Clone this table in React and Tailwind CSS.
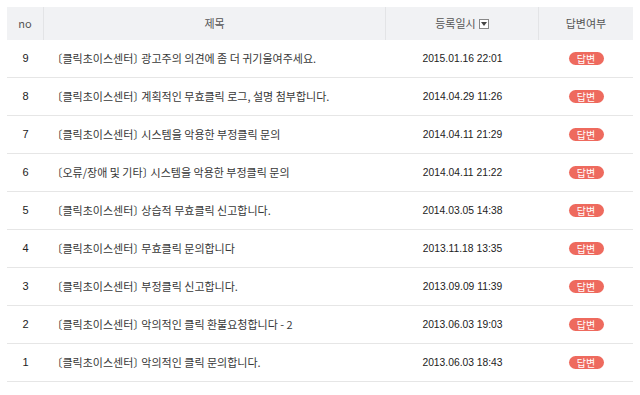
import React from "react";

const rows = [
  { no: 9, cat: "클릭초이스센터", title: "광고주의 의견에 좀 더 귀기울여주세요.", date: "2015.01.16 22:01" },
  { no: 8, cat: "클릭초이스센터", title: "계획적인 무효클릭 로그, 설명 첨부합니다.", date: "2014.04.29 11:26" },
  { no: 7, cat: "클릭초이스센터", title: "시스템을 악용한 부정클릭 문의", date: "2014.04.11 21:29" },
  { no: 6, cat: "오류/장애 및 기타", title: "시스템을 악용한 부정클릭 문의", date: "2014.04.11 21:22" },
  { no: 5, cat: "클릭초이스센터", title: "상습적 무효클릭 신고합니다.", date: "2014.03.05 14:38" },
  { no: 4, cat: "클릭초이스센터", title: "무효클릭 문의합니다", date: "2013.11.18 13:35" },
  { no: 3, cat: "클릭초이스센터", title: "부정클릭 신고합니다.", date: "2013.09.09 11:39" },
  { no: 2, cat: "클릭초이스센터", title: "악의적인 클릭 환불요청합니다 - 2", date: "2013.06.03 19:03" },
  { no: 1, cat: "클릭초이스센터", title: "악의적인 클릭 문의합니다.", date: "2013.06.03 18:43" },
];

export default function App() {
  return (
    <div className="w-[640px] h-[395px] bg-white pt-[7px] px-[7px] overflow-hidden font-['Noto_Sans_CJK_KR','Noto_Sans',sans-serif]">
      <div className="w-[626px]">
        <div className="grid grid-cols-[37px_342px_153px_94px] h-[33px] bg-[#f1f2f4] text-[11px] text-[#555]">
          <div className="flex items-center justify-center border-r border-[#e3e4e6]">no</div>
          <div className="flex items-center justify-center border-r border-[#e3e4e6]">제목</div>
          <div className="flex items-center justify-center border-r border-[#e3e4e6] gap-[3px]">
            <span>등록일시</span>
            <span className="w-[10px] h-[10px] border border-[#888] bg-white flex items-center justify-center">
              <svg width="6" height="4" viewBox="0 0 6 4"><path d="M0 0H6L3 4Z" fill="#444" /></svg>
            </span>
          </div>
          <div className="flex items-center justify-center">답변여부</div>
        </div>
        {rows.map((r) => (
          <div key={r.no} className="grid grid-cols-[37px_342px_153px_94px] h-[38px] border-b border-[#e6e6e6] items-center text-[#333]">
            <div className="text-center text-[11px] font-['Liberation_Sans',sans-serif] text-[#222]">{r.no}</div>
            <div className="pl-[13px] text-[11px] text-[#383838] whitespace-nowrap">
              <span className="[font-feature-settings:'halt']">〔</span>
              {r.cat}
              <span className="[font-feature-settings:'halt']">〕</span> {r.title}
            </div>
            <div className="text-center text-[10.3px] font-['Liberation_Sans',sans-serif] text-[#222]">{r.date}</div>
            <div className="flex justify-center">
              <span className="w-[35px] h-[13px] rounded-full bg-[#ee6a5e] text-white text-[10px] leading-[13px] text-center">답변</span>
            </div>
          </div>
        ))}
      </div>
    </div>
  );
}
